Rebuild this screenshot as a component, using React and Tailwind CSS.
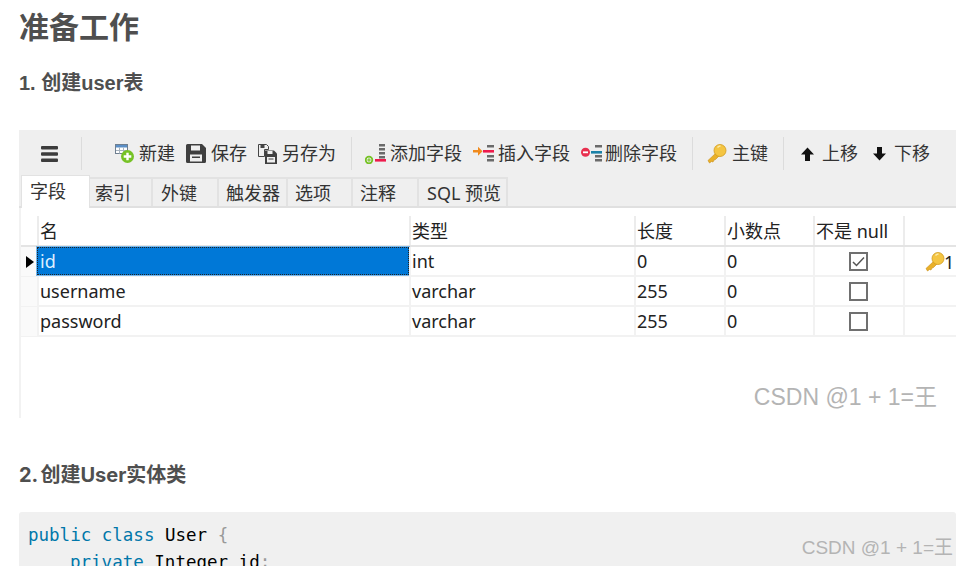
const sans = "font-['Noto_Sans','Noto_Sans_CJK_SC',sans-serif]";

function MenuIcon() {
  return (
    <svg width="17" height="16" viewBox="0 0 17 16" className="ml-[22px] shrink-0">
      <rect x="0" y="0" width="17" height="3.4" rx="1" fill="#3c3c3c" />
      <rect x="0" y="6.3" width="17" height="3.4" rx="1" fill="#3c3c3c" />
      <rect x="0" y="12.6" width="17" height="3.4" rx="1" fill="#3c3c3c" />
    </svg>
  );
}

function NewIcon() {
  return (
    <svg width="19" height="19" viewBox="0 0 19 19">
      <rect x="0.5" y="0.5" width="12" height="9" fill="#fff" stroke="#6f7f90" />
      <rect x="1" y="1" width="11" height="2.5" fill="#5b8fc7" />
      <path d="M4.5 3.5v6M8.5 3.5v6M1 6.5h11" stroke="#a9b4bf" />
      <circle cx="12.5" cy="12.5" r="6.5" fill="#76c225" />
      <path d="M12.5 8.7v7.6M8.7 12.5h7.6" stroke="#fff" strokeWidth="2.4" />
    </svg>
  );
}

function SaveIcon() {
  return (
    <svg width="20" height="19" viewBox="0 0 20 19">
      <path d="M1.5 0h14.5l4 4v13.5a1.5 1.5 0 0 1-1.5 1.5h-17A1.5 1.5 0 0 1 0 17.500v-16A1.5 1.500 0 0 1 1.500 0z" fill="#3f3f3f" />
      <rect x="5" y="1.500" width="9" height="5" fill="#efefef" />
      <rect x="4" y="10.500" width="12" height="7" fill="#efefef" />
      <rect x="6" y="12.500" width="8" height="1.500" fill="#3f3f3f" />
    </svg>
  );
}

function SaveAsIcon() {
  return (
    <svg width="19" height="20" viewBox="0 0 19 20">
      <path d="M0.500 0.500h8l2 2v3h-4v7h-6z" fill="#efefef" stroke="#444" />
      <rect x="2.500" y="0.500" width="4" height="3.500" fill="#444" />
      <path d="M7 6.500h9l3 3v10.500H7z" fill="#3f3f3f" />
      <rect x="9.500" y="7" width="5" height="3" fill="#efefef" />
      <rect x="9" y="13" width="8" height="5.500" fill="#efefef" />
      <path d="M10.500 15h5" stroke="#3f3f3f" />
    </svg>
  );
}

function Bars({ x }) {
  return (
    <g fill="#6a6a6a">
      {[0, 4, 8, 12].map((y) => (
        <rect key={y} x={x} y={y} width="6" height="2.500" />
      ))}
    </g>
  );
}

function AddFieldIcon() {
  return (
    <svg width="21" height="20" viewBox="0 0 21 20">
      <Bars x={14} />
      <rect x="10" y="15" width="11" height="2.600" fill="#ee1b4c" />
      <circle cx="4" cy="16" r="3.300" fill="none" stroke="#76c225" strokeWidth="1.800" />
      <path d="M4 14.200v3.600M2.200 16h3.600" stroke="#76c225" strokeWidth="1.200" />
    </svg>
  );
}

function InsertFieldIcon() {
  return (
    <svg width="21" height="20" viewBox="0 0 21 20">
      <g fill="#6a6a6a">
        <rect x="14" y="1" width="7" height="2.500" />
        <rect x="14" y="11" width="7" height="2.500" />
        <rect x="14" y="15" width="7" height="2.500" />
      </g>
      <rect x="10" y="6" width="11" height="2.600" fill="#ee1b4c" />
      <path d="M0 6h5V2.800L9.500 7.300 5 11.800V8.600H0z" fill="#f08a1d" />
    </svg>
  );
}

function DeleteFieldIcon() {
  return (
    <svg width="21" height="20" viewBox="0 0 21 20">
      <g fill="#6a6a6a">
        <rect x="14" y="1" width="7" height="2.500" />
        <rect x="14" y="11" width="7" height="2.500" />
        <rect x="14" y="15" width="7" height="2.500" />
      </g>
      <rect x="10" y="7" width="11" height="2.600" fill="#1b82a8" />
      <circle cx="4.500" cy="8.300" r="4.500" fill="#e8304f" />
      <rect x="2" y="7.400" width="5" height="1.800" fill="#fff" />
    </svg>
  );
}

function KeyIcon({ size = 20 }) {
  return (
    <svg width={size} height={size} viewBox="0 0 20 20">
      <path d="M9.500 8.500 1 16.500l1.500 2.500 2-1.500 1.500 0.500 1-2 1.500-0.500 4-4z" fill="#e9b02a" stroke="#c98f16" strokeWidth="0.600" />
      <circle cx="13" cy="6.500" r="6" fill="#f4c542" stroke="#d29a1c" strokeWidth="0.800" />
      <path d="M10.500 3.500a4 4 0 0 1 3-1.500" stroke="#fbe9a8" strokeWidth="1.500" fill="none" />
    </svg>
  );
}

function ArrowIcon({ down }) {
  return (
    <svg width="15" height="14" viewBox="0 0 15 14" className={down ? "rotate-180" : ""}>
      <path d="M7.500 0.500 14 7.500h-4V14H5V7.500H1z" fill="#111" />
    </svg>
  );
}

function Tool({ ml, gap, icon, label }) {
  return (
    <div className={`flex items-center shrink-0 ${ml} ${gap}`}>
      {icon}
      <span className="pb-[2px] text-[18px] leading-none text-[#333] whitespace-nowrap">{label}</span>
    </div>
  );
}

function Sep({ ml, h = "h-[33px]" }) {
  return <div className={`w-px bg-[#dcdcdc] shrink-0 ${ml} ${h}`} />;
}

function Toolbar() {
  return (
    <div className="flex items-center h-[47px]">
      <MenuIcon />
      <Sep ml="ml-[23px]" />
      <Tool ml="ml-[33px]" gap="gap-[5px]" icon={<NewIcon />} label="新建" />
      <Tool ml="ml-[11px]" gap="gap-[5px]" icon={<SaveIcon />} label="保存" />
      <Tool ml="ml-[11px]" gap="gap-[5px]" icon={<SaveAsIcon />} label="另存为" />
      <Sep ml="ml-[15px]" />
      <Tool ml="ml-[13px]" gap="gap-[4px]" icon={<AddFieldIcon />} label="添加字段" />
      <Tool ml="ml-[11px]" gap="gap-[4px]" icon={<InsertFieldIcon />} label="插入字段" />
      <Tool ml="ml-[11px]" gap="gap-[3px]" icon={<DeleteFieldIcon />} label="删除字段" />
      <Sep ml="ml-[15px]" />
      <Tool ml="ml-[14px]" gap="gap-[5px]" icon={<KeyIcon />} label="主键" />
      <Sep ml="ml-[15px]" />
      <Tool ml="ml-[16px]" gap="gap-[7px]" icon={<ArrowIcon />} label="上移" />
      <Tool ml="ml-[14px]" gap="gap-[7px]" icon={<ArrowIcon down />} label="下移" />
    </div>
  );
}

const tabs = [
  { label: "索引", cls: "w-[63px] pl-[5px]" },
  { label: "外键", cls: "w-[66px] pl-[8px]" },
  { label: "触发器", cls: "w-[69px] pl-[7px]" },
  { label: "选项", cls: "w-[65px] pl-[7px]" },
  { label: "注释", cls: "w-[66px] pl-[7px]" },
  { label: "SQL 预览", cls: "w-[89px] pl-[8px]" },
];

function Tabs() {
  return (
    <div className="flex items-end h-[31px] border-b-2 border-[#e0e0e0] pl-[2px] text-[18px] text-[#333]">
      <div className="w-[69px] h-[33px] -mb-[2px] bg-white border border-b-0 border-[#e2e2e2] pl-[8px] pt-[2px] leading-[26px]">
        字段
      </div>
      {tabs.map((t) => (
        <div
          key={t.label}
          className={`${t.cls} h-[29px] border-t-2 border-r-2 border-[#e2e2e2] leading-[29px] whitespace-nowrap`}
        >
          {t.label}
        </div>
      ))}
    </div>
  );
}

const rows = [
  { name: "id", type: "int", len: "0", checked: true, key: true },
  { name: "username", type: "varchar", len: "255" },
  { name: "password", type: "varchar", len: "255" },
];

const gridCols = "grid grid-cols-[16px_372px_225px_90px_89px_90px_53px]";

function Checkbox({ checked }) {
  return (
    <div className="w-[19px] h-[19px] mr-[2px] border-2 border-[#707070] bg-white flex items-center justify-center">
      {checked && (
        <svg width="15" height="15" viewBox="0 0 15 15">
          <path d="M2 8l3.500 3.500L13 3.500" fill="none" stroke="#555" strokeWidth="1.500" />
        </svg>
      )}
    </div>
  );
}

function Head({ children }) {
  return <div className="h-[29px] border-l-2 border-[#ececec] pl-px leading-[30px]">{children}</div>;
}

function Cell({ children }) {
  return <div className="border-l-2 border-[#f2f2f2] pl-px leading-[29px]">{children}</div>;
}

function FieldTable() {
  return (
    <div className="pt-[8px] text-[18px] text-[#222] border-l-2 border-[#f2f2f2]">
      <div className={`${gridCols} border-b-2 border-[#e4e4e4]`}>
        <div />
        <Head>名</Head>
        <Head>类型</Head>
        <Head>长度</Head>
        <Head>小数点</Head>
        <Head>不是 null</Head>
        <Head />
      </div>
      {rows.map((r) => (
        <div key={r.name} className={`${gridCols} h-[30px] border-b-2 border-[#f2f2f2]`}>
          <div className="flex items-center pl-[5px] bg-[#fafafa]">
            {r.key && <div className="w-0 h-0 border-y-[6px] border-y-transparent border-l-[8px] border-l-black" />}
          </div>
          {r.key ? (
            <div className="bg-[#0078d7] border border-dotted border-[#222] outline outline-1 outline-[#7ab8ea] pl-[2px] leading-[27px] text-[#dcefff] h-[28px]">
              {r.name}
            </div>
          ) : (
            <Cell>{r.name}</Cell>
          )}
          <Cell>{r.type}</Cell>
          <Cell>{r.len}</Cell>
          <Cell>0</Cell>
          <div className="border-l-2 border-[#f2f2f2] flex items-center justify-center">
            <Checkbox checked={r.checked} />
          </div>
          <div className="border-l-2 border-[#f2f2f2] flex items-center pl-[20px] overflow-hidden leading-none">
            {r.key && (
              <>
                <KeyIcon />
                <span className="-ml-[1px]">1</span>
              </>
            )}
          </div>
        </div>
      ))}
    </div>
  );
}

function Watermark({ className }) {
  return (
    <span className={`absolute font-['Liberation_Sans','Noto_Sans_CJK_SC',sans-serif] whitespace-nowrap text-[#b4b4b4] ${className}`}>
      CSDN @1 + 1=王
    </span>
  );
}

function CodeBlock() {
  return (
    <div className="relative mt-[22px] h-[80px] overflow-hidden rounded-t-[3px] bg-[#f0f0f0] pl-[9px] pt-[10px] font-['DejaVu_Sans_Mono',monospace] text-[17.500px] leading-[27px]">
      <div>
        <span className="text-[#0077aa]">public class</span> <span className="text-black">User</span>{" "}
        <span className="text-[#999]">{"{"}</span>
      </div>
      <div className="pl-[42px]">
        <span className="text-[#0077aa]">private</span> <span className="text-black">Integer id</span>
        <span className="text-[#999]">;</span>
      </div>
      <Watermark className="right-[3px] top-[24px] text-[19px] leading-[24px]" />
    </div>
  );
}

export default function App() {
  return (
    <div className={`h-[566px] w-[968px] overflow-hidden bg-white pl-[19px] ${sans}`}>
      <div className="w-[937px]">
        <h1 className="pt-[7px] text-[30px] leading-[40px] font-bold text-[#4f4f4f]">准备工作</h1>
        <h3 className="mt-[21px] text-[20px] leading-[30px] font-bold text-[#4f4f4f] font-['Liberation_Sans','Noto_Sans_CJK_SC',sans-serif]">
          1. 创建user表
        </h3>
        <div className="relative mt-[32px] h-[288px] overflow-hidden">
          <div className="bg-[#efefef]">
            <Toolbar />
            <Tabs />
          </div>
          <FieldTable />
          <div className="absolute left-0 top-[207px] bottom-0 w-[2px] bg-[#f2f2f2]" />
          <Watermark className="right-[19px] top-[252px] text-[23px] leading-[30px]" />
        </div>
        <h3 className="mt-[42px] text-[20px] leading-[30px] font-bold text-[#4f4f4f] [word-spacing:-2px] font-['Inter','Noto_Sans_CJK_SC',sans-serif]">
          2. 创建User实体类
        </h3>
        <CodeBlock />
      </div>
    </div>
  );
}
